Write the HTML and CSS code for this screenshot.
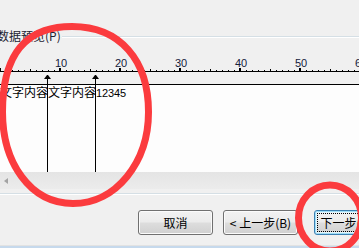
FILE: index.html
```html
<!DOCTYPE html>
<html lang="zh-CN">
<head>
<meta charset="utf-8">
<title>数据预览</title>
<link rel="stylesheet" href="styles.css">
</head>
<body>
<div class="dialog">
  <div class="group-head">
    <span class="group-label">数据预览(P)</span>
    <span class="group-line"></span>
  </div>

  <div class="ruler">
    <div class="ruler-nums">
      <span>10</span><span>20</span><span>30</span><span>40</span><span>50</span><span>60</span>
    </div>
    <div class="ruler-ticks"></div>
  </div>

  <div class="preview">
    <div class="marker-strip"></div>
    <div class="data">
      <div class="data-row">文字内容文字内容<span class="num">12345</span></div>
    </div>
    <div class="marker" style="left:47px"><i class="arrow"></i><i class="stem"></i></div>
    <div class="marker" style="left:95px"><i class="arrow"></i><i class="stem"></i></div>
  </div>

  <div class="hscroll"><i class="scroll-left"></i></div>
  <div class="group-bottom"></div>

  <div class="buttons">
    <button class="btn btn-cancel">取消</button>
    <button class="btn btn-back">&lt; 上一步(B)</button>
    <button class="btn btn-default"><span class="focus">下一步(N) &gt;</span></button>
  </div>

  <div class="taskbar"></div>
</div>

<svg class="annot" width="359" height="248" viewBox="0 0 359 248">
  <path d="M72 26.5 C120 26.5 148.5 60 148.5 112 C148.5 162.5 116 203.5 73 203.5 C30 203.5 2.5 162.5 2.5 112 C2.5 55 25 26.5 72 26.5 Z" fill="none" stroke="#fb3b3e" stroke-width="7"/>
  <ellipse cx="330" cy="218" rx="31.5" ry="33" fill="none" stroke="#fb3b3e" stroke-width="7"/>
</svg>
</body>
</html>
```
FILE: styles.css
```css
html, body {
  margin: 0;
  padding: 0;
}

body {
  width: 359px;
  height: 248px;
  overflow: hidden;
  position: relative;
  background: #f0f0f0;
  font-family: "Noto Sans CJK SC", "Liberation Sans", sans-serif;
  color: #000;
}

.dialog {
  width: 359px;
  display: flex;
  flex-direction: column;
}

/* group box header */
.group-head {
  margin-top: 29px;
  height: 13px;
  display: flex;
  align-items: flex-start;
}

.group-label {
  margin-left: -3px;
  font-size: 12px;
  line-height: 13px;
  color: #1c2230;
  white-space: nowrap;
}

.group-line {
  flex: 1;
  margin-top: 7px;
  margin-left: 1px;
  height: 0;
  border-top: 1px solid #d5dfe5;
  border-bottom: 1px solid #ffffff;
}

/* ruler */
.ruler {
  margin-top: 16px;
}

.ruler-nums {
  height: 10px;
  display: flex;
  padding-left: 31px;
  font-family: "Liberation Sans", Arial, sans-serif;
  font-size: 11px;
  line-height: 11px;
  color: #14203c;
}

.ruler-nums span {
  flex: 0 0 60px;
  text-align: center;
}

.ruler-ticks {
  height: 3px;
  border-bottom: 1px solid #000;
  background-image:
    linear-gradient(to right, #000 0 2px, transparent 2px),
    linear-gradient(to right, #000 0 1px, transparent 1px),
    linear-gradient(to right, #000 0 1px, transparent 1px);
  background-size: 60px 3px, 60px 2px, 6px 1px;
  background-position: -1px bottom, 30px bottom, 0 bottom;
  background-repeat: repeat-x;
}

/* preview grid */
.preview {
  position: relative;
}

.marker-strip {
  height: 12px;
  border-bottom: 1px solid #000;
}

.data {
  height: 87px;
  background: #fdfdfd;
}

.data-row {
  padding-top: 1px;
  font-size: 12px;
  line-height: 12px;
  white-space: nowrap;
  color: #000;
}

.num {
  font-family: "Liberation Sans", Arial, sans-serif;
  font-size: 11px;
  letter-spacing: -0.12px;
}

.marker {
  position: absolute;
  top: 3px;
  bottom: 0;
  width: 1px;
  display: flex;
  flex-direction: column;
  align-items: center;
}

.arrow {
  display: block;
  width: 1px;
  height: 0;
  border-left: 3px solid transparent;
  border-right: 3px solid transparent;
  border-bottom: 4px solid #000;
  flex: 0 0 auto;
}

.stem {
  display: block;
  flex: 1;
  width: 1px;
  background: #000;
}

/* horizontal scrollbar */
.hscroll {
  height: 17px;
  background: linear-gradient(to bottom, #e4e4e4, #ececec);
  display: flex;
  align-items: center;
}

.scroll-left {
  display: block;
  margin-left: 4px;
  width: 0;
  height: 0;
  border-top: 3.5px solid transparent;
  border-bottom: 3.5px solid transparent;
  border-right: 4px solid #a3a3a3;
}

.group-bottom {
  margin-top: 4px;
  height: 0;
  border-top: 1px solid #d5dfe5;
  border-bottom: 1px solid #ffffff;
}

/* buttons */
.buttons {
  margin-top: 15px;
  height: 25px;
  display: flex;
  padding-left: 138px;
}

.btn {
  box-sizing: border-box;
  flex: 0 0 75px;
  width: 75px;
  height: 25px;
  margin: 0;
  padding: 0;
  border: 1px solid #707070;
  border-radius: 3px;
  background: linear-gradient(to bottom, #f2f2f2 0%, #ebebeb 48%, #dddddd 52%, #d0d0d0 100%);
  box-shadow: inset 0 0 0 1px #fbfbfb;
  font-family: "Noto Sans CJK SC", "Liberation Sans", sans-serif;
  font-size: 12px;
  line-height: 14px;
  color: #000;
  display: flex;
  align-items: center;
  justify-content: center;
  white-space: nowrap;
}

.btn-back {
  margin-left: 10px;
}

.btn-default {
  margin-left: 16px;
  padding: 2px;
  border-color: #3c7fb1;
  box-shadow: inset 0 0 0 1px #9fdff8, inset 0 0 0 2px #e6f4fb;
  align-items: stretch;
}

.focus {
  flex: 1;
  border: 1px dotted #000;
  display: flex;
  align-items: center;
  justify-content: center;
}

.taskbar {
  margin-top: 10px;
  height: 3px;
  border-top: 1px solid #e2e2e2;
  background: #c6d9ec;
}

/* annotation overlay */
.annot {
  position: absolute;
  left: 0;
  top: 0;
  pointer-events: none;
}
```
